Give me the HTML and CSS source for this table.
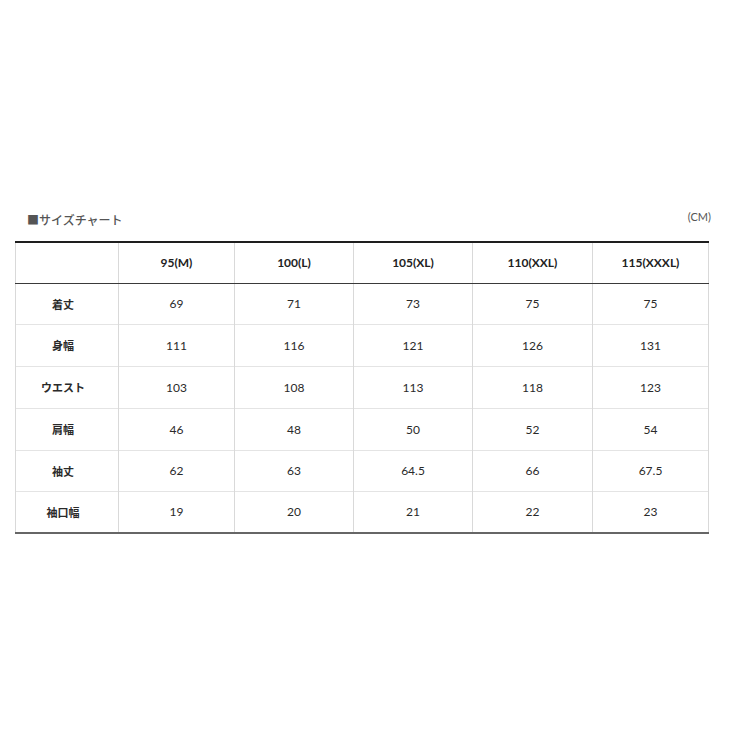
FILE: index.html
```html
<!DOCTYPE html>
<html lang="ja">
<head>
<meta charset="utf-8">
<title>サイズチャート</title>
<link rel="stylesheet" href="styles.css">
</head>
<body>
<div class="page">
  <div class="caption-row">
    <div class="title">■サイズチャート</div>
    <div class="unit">(CM)</div>
  </div>
  <table class="chart">
    <colgroup>
      <col class="c0"><col class="c1"><col class="c2"><col class="c3"><col class="c4"><col class="c5">
    </colgroup>
    <thead>
      <tr class="h41"><th></th><th>95(M)</th><th>100(L)</th><th>105(XL)</th><th>110(XXL)</th><th>115(XXXL)</th></tr>
    </thead>
    <tbody>
      <tr class="h41"><th>着丈</th><td>69</td><td>71</td><td>73</td><td>75</td><td>75</td></tr>
      <tr class="h42"><th>身幅</th><td>111</td><td>116</td><td>121</td><td>126</td><td>131</td></tr>
      <tr class="h42"><th>ウエスト</th><td>103</td><td>108</td><td>113</td><td>118</td><td>123</td></tr>
      <tr class="h42"><th>肩幅</th><td>46</td><td>48</td><td>50</td><td>52</td><td>54</td></tr>
      <tr class="h41"><th>袖丈</th><td>62</td><td>63</td><td>64.5</td><td>66</td><td>67.5</td></tr>
      <tr class="h42"><th>袖口幅</th><td>19</td><td>20</td><td>21</td><td>22</td><td>23</td></tr>
    </tbody>
  </table>
</div>
</body>
</html>
```
FILE: styles.css
```css
html, body {
  margin: 0;
  padding: 0;
  background: #ffffff;
}

body {
  font-family: Lato, "Noto Sans CJK JP", sans-serif;
  color: #333333;
}

.page {
  padding: 210px 0 0 15px;
}

.caption-row {
  display: flex;
  justify-content: space-between;
  align-items: flex-start;
  width: 696px;
  height: 31px;
}

.title {
  margin: 3px 0 0 12px;
  font-size: 12px;
  line-height: 16px;
  color: #555555;
  font-weight: 500;
}

.unit {
  font-size: 11px;
  line-height: 14px;
  color: #555555;
}

.chart {
  border-collapse: collapse;
  table-layout: fixed;
  width: 693px;
  border-top: 2px solid #1e1e1e;
  border-bottom: 2px solid #666666;
}

.c0 { width: 103px; }
.c1 { width: 116px; }
.c2 { width: 119px; }
.c3 { width: 119px; }
.c4 { width: 120px; }
.c5 { width: 116px; }

.chart th,
.chart td {
  padding: 0;
  text-align: center;
  vertical-align: middle;
  border-left: 1px solid #d9d9d9;
  border-right: 1px solid #d9d9d9;
  border-top: 1px solid #e4e4e4;
  font-size: 12px;
}

.chart thead th {
  font-weight: 700;
  color: #222222;
  border-bottom: 1px solid #3a3a3a;
  font-size: 12px;
}

.chart tbody th {
  font-weight: 600;
  color: #2a2a2a;
  font-size: 11px;
  padding-right: 8px;
}

.chart td {
  color: #2a2a2a;
  font-weight: 400;
}

.h41 { height: 41px; }
.h42 { height: 42px; }
```
